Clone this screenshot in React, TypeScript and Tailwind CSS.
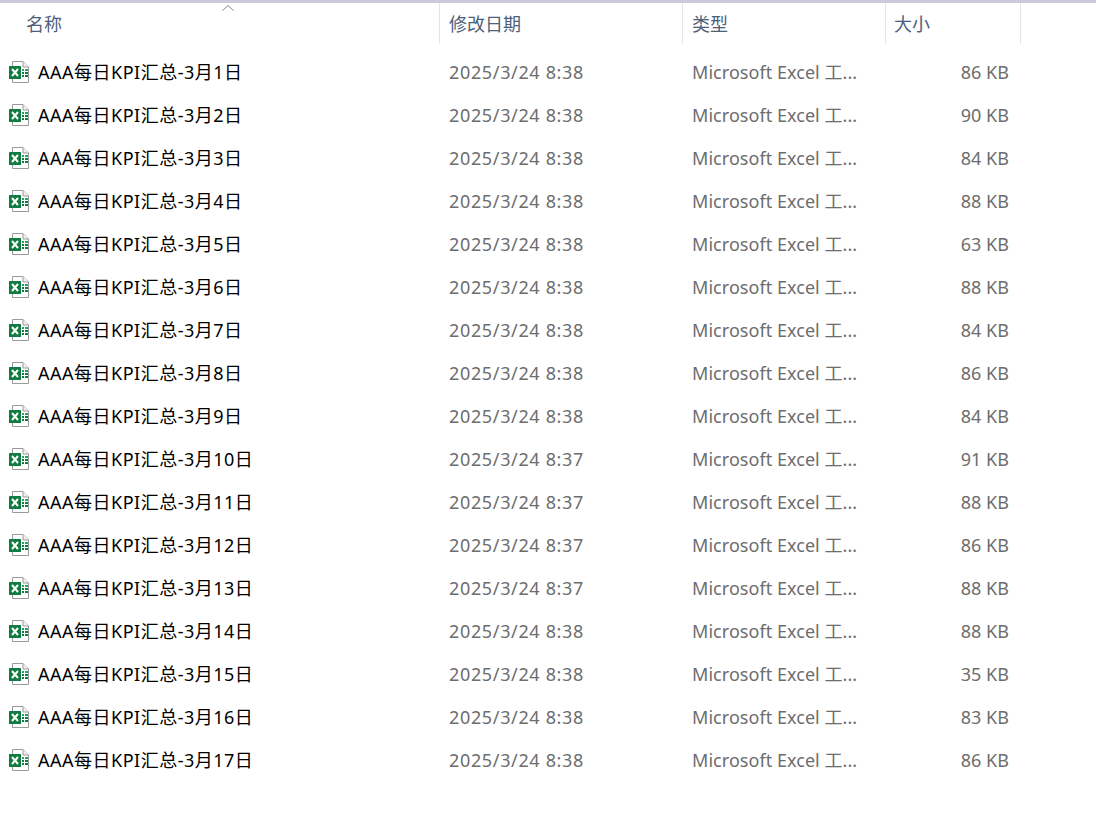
const rows: [string, string, string][] = [
  ["1", "8:38", "86"],
  ["2", "8:38", "90"],
  ["3", "8:38", "84"],
  ["4", "8:38", "88"],
  ["5", "8:38", "63"],
  ["6", "8:38", "88"],
  ["7", "8:38", "84"],
  ["8", "8:38", "86"],
  ["9", "8:38", "84"],
  ["10", "8:37", "91"],
  ["11", "8:37", "88"],
  ["12", "8:37", "86"],
  ["13", "8:37", "88"],
  ["14", "8:38", "88"],
  ["15", "8:38", "35"],
  ["16", "8:38", "83"],
  ["17", "8:38", "86"],
];

function ExcelIcon() {
  return (
    <svg width="20" height="22" viewBox="0 0 20 22" className="mb-[1px] shrink-0">
      <path d="M3.5 .5H14L19.5 6V21.5H3.5Z" fill="#fff" stroke="#9a9a9a" />
      <path d="M14 .5V6H19.5" fill="#f1f1f1" stroke="#9a9a9a" />
      <rect x="13" y="8" width="2" height="2" fill="#21a366" />
      <rect x="16" y="8" width="3" height="2" fill="#21a366" />
      <rect x="13" y="11" width="2" height="2" fill="#107c41" />
      <rect x="16" y="11" width="3" height="2" fill="#107c41" />
      <rect x="13" y="14" width="2" height="2" fill="#107c41" />
      <rect x="16" y="14" width="3" height="2" fill="#107c41" />
      <rect x="0" y="5" width="12" height="13" rx="0.5" fill="#107c41" />
      <path d="M3 8L9 15M9 8L3 15" stroke="#fff" strokeWidth="2" />
    </svg>
  );
}

function HeaderCell({ label, className }: { label: string; className: string }) {
  return (
    <div className={`flex h-full items-center border-r border-[#e5e5e5] pt-[2px] ${className}`}>
      <span>{label}</span>
    </div>
  );
}

export default function App() {
  return (
    <div className="relative min-h-[828px] w-[1096px] overflow-hidden bg-white font-['Noto_Sans','Noto_Sans_CJK_SC',sans-serif] text-[18px]">
      <div className="h-[3px] bg-[#cbc9dc]" />
      <div className="flex h-[41px] text-[#4c607a]">
        <HeaderCell label="名称" className="w-[440px] pl-[26px]" />
        <HeaderCell label="修改日期" className="w-[243px] pl-[9px]" />
        <HeaderCell label="类型" className="w-[203px] pl-[9px]" />
        <HeaderCell label="大小" className="w-[135px] pl-[8px]" />
      </div>
      <svg width="12" height="6" viewBox="0 0 12 6" className="absolute left-[222px] top-[5px]">
        <path d="M.5 5.5L6 .5L11.5 5.5" fill="none" stroke="#8a8a8a" />
      </svg>
      <div className="pt-[7px]">
        {rows.map(([day, time, size]) => (
          <div key={day} className="flex h-[43px] items-center text-[#6d6d6d]">
            <div className="flex w-[440px] items-center gap-[9px] pl-[9px] text-black">
              <ExcelIcon />
              <span className="tracking-[0.5px]">AAA每日KPI汇总-3月{day}日</span>
            </div>
            <div className="w-[243px] pl-[9px] tracking-[0.65px]">2025/3/24 {time}</div>
            <div className="w-[203px] pl-[9px] tracking-[0.05px]">Microsoft Excel 工...</div>
            <div className="w-[123px] text-right tracking-[0.05px]">{size} KB</div>
          </div>
        ))}
      </div>
    </div>
  );
}
